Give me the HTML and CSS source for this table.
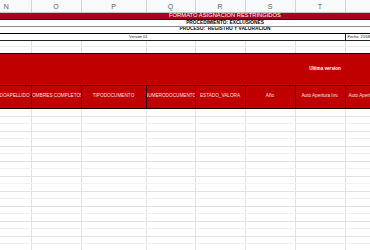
FILE: index.html
```html
<!DOCTYPE html>
<html>
<head>
<meta charset="utf-8">
<link rel="stylesheet" href="styles.css">
</head>
<body>
<div class="viewport">
<table class="sheet">
<colgroup>
<col class="c-n"><col class="c-o"><col class="c-p"><col class="c-q"><col class="c-r"><col class="c-s"><col class="c-t"><col class="c-u">
</colgroup>
<tr class="letters">
<td>N</td><td>O</td><td>P</td><td>Q</td><td>R</td><td>S</td><td>T</td><td>U</td>
</tr>
<tr class="title"><td colspan="8"><div class="t">FORMATO ASIGNACIÓN RESTRINGIDOS</div></td></tr>
<tr class="proc1"><td colspan="8"><div class="t">PROCEDIMIENTO: EXCLUSIONES</div></td></tr>
<tr class="proc2"><td colspan="8"><div class="t">PROCESO:&nbsp; REGISTRO Y VALORACIÓN</div></td></tr>
<tr class="version"><td colspan="7" class="vbox"><div class="t">Versión 01</div></td><td class="fecha"><div class="t">Fecha: 25/08/2020</div></td></tr>
<tr class="blank b1"><td></td><td></td><td></td><td></td><td></td><td></td><td></td><td></td></tr>
<tr class="blank b2"><td></td><td></td><td></td><td></td><td></td><td></td><td></td><td></td></tr>
<tr class="band"><td colspan="6"></td><td colspan="2" class="ultima"><div class="t">Ultima version</div></td></tr>
<tr class="heads">
<td><div class="h">SEGUNDOAPELLIDO</div></td>
<td><div class="h">NOMBRES COMPLETOS</div></td>
<td><div class="h">TIPODOCUMENTO</div></td>
<td><div class="h">NUMERODOCUMENTO</div></td>
<td><div class="h">ESTADO_VALORA</div></td>
<td><div class="h">Año</div></td>
<td><div class="h">Auto Apertura Inv.</div></td>
<td><div class="h left">Auto Apertura Inv.</div></td>
</tr>
<tr class="row"><td></td><td></td><td></td><td></td><td></td><td></td><td></td><td></td></tr>
<tr class="row"><td></td><td></td><td></td><td></td><td></td><td></td><td></td><td></td></tr>
<tr class="row"><td></td><td></td><td></td><td></td><td></td><td></td><td></td><td></td></tr>
<tr class="row"><td></td><td></td><td></td><td></td><td></td><td></td><td></td><td></td></tr>
<tr class="row"><td></td><td></td><td></td><td></td><td></td><td></td><td></td><td></td></tr>
<tr class="row"><td></td><td></td><td></td><td></td><td></td><td></td><td></td><td></td></tr>
<tr class="row"><td></td><td></td><td></td><td></td><td></td><td></td><td></td><td></td></tr>
<tr class="row"><td></td><td></td><td></td><td></td><td></td><td></td><td></td><td></td></tr>
<tr class="row"><td></td><td></td><td></td><td></td><td></td><td></td><td></td><td></td></tr>
<tr class="row"><td></td><td></td><td></td><td></td><td></td><td></td><td></td><td></td></tr>
<tr class="row"><td></td><td></td><td></td><td></td><td></td><td></td><td></td><td></td></tr>
<tr class="row"><td></td><td></td><td></td><td></td><td></td><td></td><td></td><td></td></tr>
<tr class="row"><td></td><td></td><td></td><td></td><td></td><td></td><td></td><td></td></tr>
<tr class="row"><td></td><td></td><td></td><td></td><td></td><td></td><td></td><td></td></tr>
<tr class="row"><td></td><td></td><td></td><td></td><td></td><td></td><td></td><td></td></tr>
<tr class="row"><td></td><td></td><td></td><td></td><td></td><td></td><td></td><td></td></tr>
<tr class="row"><td></td><td></td><td></td><td></td><td></td><td></td><td></td><td></td></tr>
<tr class="row"><td></td><td></td><td></td><td></td><td></td><td></td><td></td><td></td></tr>
<tr class="row"><td></td><td></td><td></td><td></td><td></td><td></td><td></td><td></td></tr>
<tr class="row"><td></td><td></td><td></td><td></td><td></td><td></td><td></td><td></td></tr>
</table>
</div>
</body>
</html>
```
FILE: styles.css
```css
html, body {
  margin: 0;
  padding: 0;
  background: #ffffff;
}
body {
  width: 370px;
  height: 250px;
  overflow: hidden;
  font-family: "Liberation Sans", Arial, sans-serif;
}
.viewport {
  width: 370px;
  height: 250px;
  overflow: hidden;
}
.sheet {
  border-collapse: collapse;
  table-layout: fixed;
  width: 433px;
  margin-left: -18px;
}
.sheet td {
  padding: 0;
  overflow: hidden;
  white-space: nowrap;
}
.c-n { width: 49px; }
.c-o { width: 50px; }
.c-p { width: 65px; }
.c-q { width: 49px; }
.c-r { width: 50px; }
.c-s { width: 50px; }
.c-t { width: 50px; }
.c-u { width: 70px; }

.t {
  display: flex;
  justify-content: center;
  align-items: center;
  height: 100%;
  line-height: 1;
}

/* column letters */
.letters td {
  height: 12px;
  background: #f8f9fa;
  color: #666666;
  font-size: 7px;
  text-align: center;
  border-right: 1px solid #d6d6d6;
  border-bottom: 1px solid #c4c4c4;
}

/* title */
.title td {
  height: 6px;
  background: #a50021;
  color: #ffffff;
  font-size: 5.8px;
  border-bottom: 1px solid #3a0010;
  padding-left: 53px;
}
.proc1 td {
  height: 4px;
  font-size: 4.8px;
  font-weight: bold;
  color: #000000;
  border-bottom: 1px solid #8a8a8a;
  padding-left: 53px;
  overflow: visible;
}
.proc1 .t {
  padding-top: 1px;
}
.proc2 td {
  height: 6px;
  font-size: 4.8px;
  font-weight: bold;
  color: #000000;
  border-bottom: 1px solid #000000;
  padding-left: 53px;
}
.version td {
  height: 6px;
  font-size: 3.9px;
  color: #222222;
  border-bottom: 1px solid #222222;
}
.version .vbox {
  border-right: 1px solid #222222;
  padding-right: 50px;
}
.version .fecha .t {
  justify-content: flex-start;
  padding-left: 2px;
}
.blank td {
  border-right: 1px solid #e2e2e2;
}
.b1 td {
  height: 5px;
  border-bottom: 1px solid #ececec;
}
.b2 td {
  height: 6px;
  border-bottom: 1px solid #2a0000;
}

/* red band */
.band td {
  height: 31px;
  background: #c00000;
  border-bottom: 1px solid #2a0000;
}
.band .ultima {
  color: #ffffff;
  font-size: 4.6px;
  font-weight: bold;
  padding-right: 60px;
}

.heads td {
  height: 22px;
  background: #c00000;
  border-right: 1px solid #1a0000;
  border-bottom: 1px solid #1a0000;
}
.h {
  display: flex;
  justify-content: center;
  align-items: center;
  height: 100%;
  font-size: 4.7px;
  color: #f6e0e0;
  line-height: 1;
}
.h.left {
  justify-content: flex-start;
  padding-left: 3px;
}

/* body grid */
.row td {
  height: 7px;
  border-right: 1px solid #e3e3e3;
  border-bottom: 1px solid #e3e3e3;
}
.row:nth-child(odd) td {
  height: 6px;
  border-bottom-color: #f1f1f1;
}
```
